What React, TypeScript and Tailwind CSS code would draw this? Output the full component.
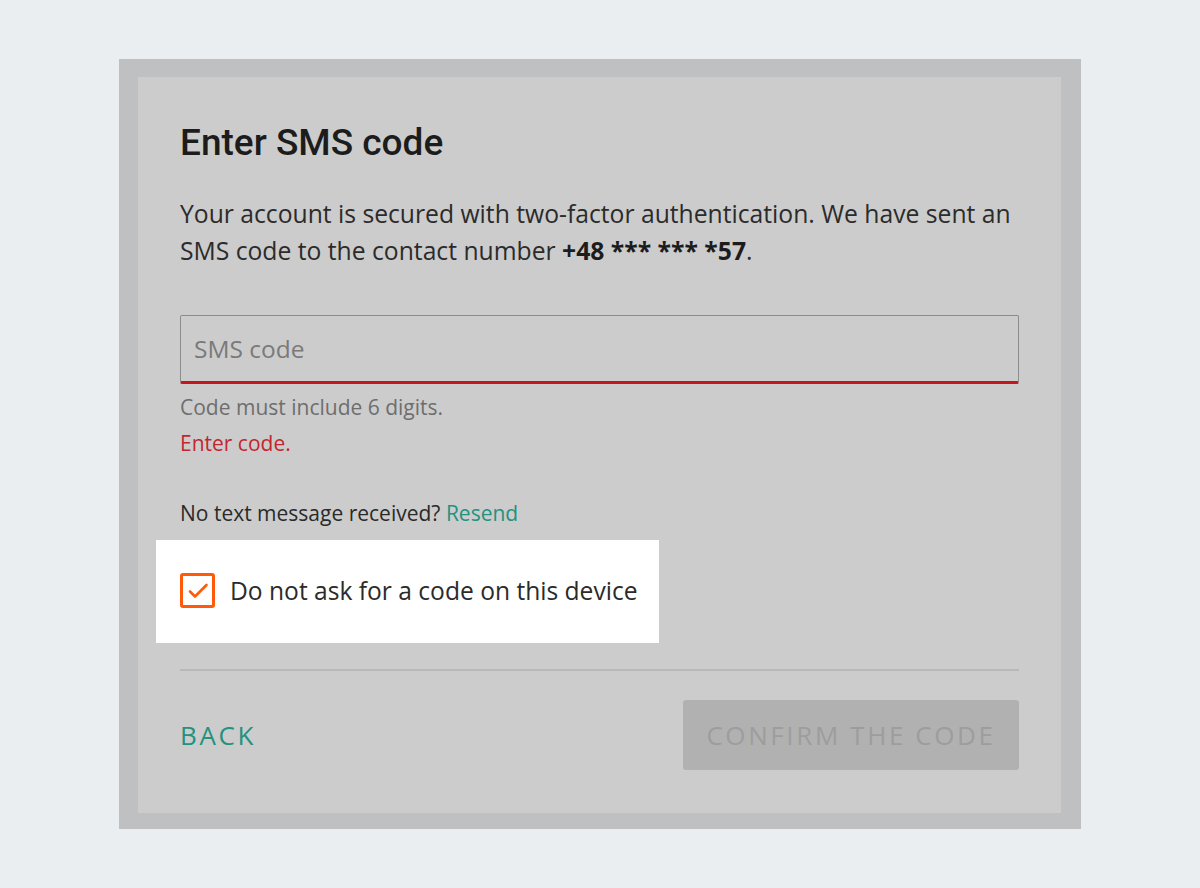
import { useState } from "react";

export default function App() {
  const [remember, setRemember] = useState(true);

  return (
    <div
      className="flex min-h-[888px] w-full items-start justify-center bg-[#ebeef1] pt-[59px]"
      style={{ fontFamily: '"Open Sans", "Liberation Sans", sans-serif' }}
    >
      <div className="w-[962px] bg-[#bfc0c2] pb-[16px] pl-[19px] pr-[20px] pt-[18px]">
        <div className="bg-[#cccccc] px-[42px] pb-[43px] pt-[44px]">
          <h1
            className="text-[37px] font-medium leading-[44px] text-[#1c1c1c]"
            style={{ fontFamily: "Roboto, 'Liberation Sans', sans-serif" }}
          >
            Enter SMS code
          </h1>

          <p className="mt-[30px] text-[24.7px] leading-[37px] text-[#2b2b2b]">
            Your account is secured with two-factor authentication. We have sent an SMS code
            to the contact number <span className="font-bold text-[#1c1c1c]">+48 *** *** *57</span>.
          </p>

          <div className="mt-[46px]">
            <input
              type="text"
              placeholder="SMS code"
              className="h-[69px] w-full rounded-[2px] border border-b-[3px] border-[#8c8c8c] border-b-[#c4161c] bg-transparent px-[13px] text-[24.5px] text-[#222] placeholder:text-[#7a7a7a] focus:outline-none"
            />
            <p className="mt-[10px] text-[21px] leading-[26px] text-[#6e6e6e]">
              Code must include 6 digits.
            </p>
            <p className="mt-[10px] text-[21px] leading-[26px] text-[#c4262e]">Enter code.</p>
          </div>

          <p className="mt-[44px] text-[21px] leading-[26px] text-[#2a2a2a]">
            No text message received?{" "}
            <a href="#" className="text-[#23927f]">
              Resend
            </a>
          </p>

          <label className="-ml-[24px] mt-[14px] flex w-fit cursor-pointer items-center gap-[15px] bg-white pb-[35px] pl-[24px] pr-[21px] pt-[33px]">
            <button
              type="button"
              onClick={() => setRemember(!remember)}
              className="flex h-[35px] w-[35px] items-center justify-center rounded-[3px] border-[3px] border-[#ff5a0a]"
            >
              {remember && (
                <svg width="22" height="22" viewBox="0 0 22 22" fill="none">
                  <path
                    d="M3 11.5l5 5L19.5 5"
                    stroke="#ff5a0a"
                    strokeWidth="2.6"
                    strokeLinecap="round"
                    strokeLinejoin="round"
                  />
                </svg>
              )}
            </button>
            <span className="text-[24.6px] leading-[32px] text-[#2b2b2b]">
              Do not ask for a code on this device
            </span>
          </label>

          <div className="mt-[26px] h-[2px] bg-[#b8b8b8]" />

          <div className="mt-[29px] flex items-center justify-between">
            <button
              type="button"
              className="text-[26px] uppercase tracking-[0.1em] text-[#23927f]"
            >
              Back
            </button>
            <button
              type="button"
              disabled
              className="flex h-[70px] w-[336px] items-center justify-center rounded-[3px] bg-[#b1b1b1] text-[26px] uppercase tracking-[0.1em] text-[#9d9d9d]"
            >
              Confirm the code
            </button>
          </div>
        </div>
      </div>
    </div>
  );
}
